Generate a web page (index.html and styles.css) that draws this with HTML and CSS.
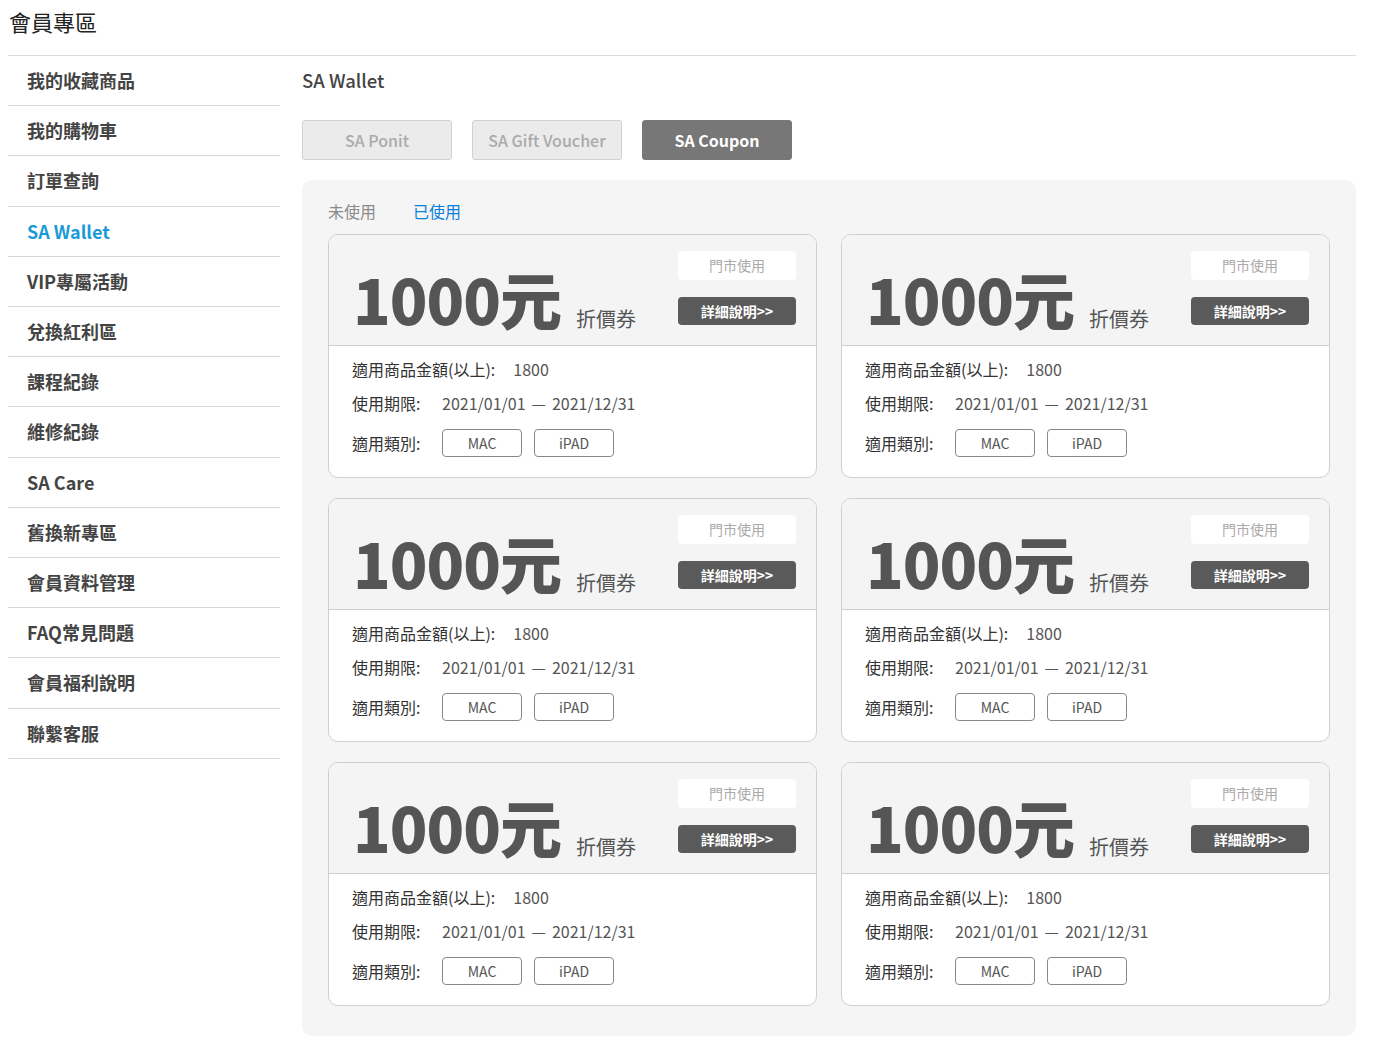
FILE: index.html
```html
<!DOCTYPE html>
<html lang="zh-Hant">
<head>
<meta charset="utf-8">
<title>會員專區</title>
<link rel="stylesheet" href="styles.css">
</head>
<body>
<header class="page-head"><h1 class="page-title">會員專區</h1></header>
<div class="layout">
  <nav class="sidebar">
    <a class="side-item">我的收藏商品</a>
    <a class="side-item">我的購物車</a>
    <a class="side-item">訂單查詢</a>
    <a class="side-item active">SA Wallet</a>
    <a class="side-item">VIP專屬活動</a>
    <a class="side-item">兌換紅利區</a>
    <a class="side-item">課程紀錄</a>
    <a class="side-item">維修紀錄</a>
    <a class="side-item">SA Care</a>
    <a class="side-item">舊換新專區</a>
    <a class="side-item">會員資料管理</a>
    <a class="side-item">FAQ常見問題</a>
    <a class="side-item">會員福利說明</a>
    <a class="side-item">聯繫客服</a>
  </nav>
  <main class="main">
    <h2 class="main-title">SA Wallet</h2>
    <div class="tabs">
      <button class="tab">SA Ponit</button>
      <button class="tab">SA Gift Voucher</button>
      <button class="tab active">SA Coupon</button>
    </div>
    <section class="panel">
      <div class="filters">
        <span class="filter">未使用</span>
        <span class="filter active">已使用</span>
      </div>
      <div class="grid">
        <div class="card">
          <div class="card-top">
            <div class="amount"><span class="num">1000元</span><span class="kind">折價券</span></div>
            <div class="actions"><span class="store">門市使用</span><span class="detail">詳細說明&gt;&gt;</span></div>
          </div>
          <div class="card-body">
            <div class="row r1"><span class="label">適用商品金額(以上):</span><span class="val">1800</span></div>
            <div class="row r2"><span class="label">使用期限:</span><span class="val">2021/01/01<span class="dash">—</span>2021/12/31</span></div>
            <div class="row r3"><span class="label">適用類別:</span><span class="tag">MAC</span><span class="tag">iPAD</span></div>
          </div>
        </div>
        <div class="card">
          <div class="card-top">
            <div class="amount"><span class="num">1000元</span><span class="kind">折價券</span></div>
            <div class="actions"><span class="store">門市使用</span><span class="detail">詳細說明&gt;&gt;</span></div>
          </div>
          <div class="card-body">
            <div class="row r1"><span class="label">適用商品金額(以上):</span><span class="val">1800</span></div>
            <div class="row r2"><span class="label">使用期限:</span><span class="val">2021/01/01<span class="dash">—</span>2021/12/31</span></div>
            <div class="row r3"><span class="label">適用類別:</span><span class="tag">MAC</span><span class="tag">iPAD</span></div>
          </div>
        </div>
        <div class="card">
          <div class="card-top">
            <div class="amount"><span class="num">1000元</span><span class="kind">折價券</span></div>
            <div class="actions"><span class="store">門市使用</span><span class="detail">詳細說明&gt;&gt;</span></div>
          </div>
          <div class="card-body">
            <div class="row r1"><span class="label">適用商品金額(以上):</span><span class="val">1800</span></div>
            <div class="row r2"><span class="label">使用期限:</span><span class="val">2021/01/01<span class="dash">—</span>2021/12/31</span></div>
            <div class="row r3"><span class="label">適用類別:</span><span class="tag">MAC</span><span class="tag">iPAD</span></div>
          </div>
        </div>
        <div class="card">
          <div class="card-top">
            <div class="amount"><span class="num">1000元</span><span class="kind">折價券</span></div>
            <div class="actions"><span class="store">門市使用</span><span class="detail">詳細說明&gt;&gt;</span></div>
          </div>
          <div class="card-body">
            <div class="row r1"><span class="label">適用商品金額(以上):</span><span class="val">1800</span></div>
            <div class="row r2"><span class="label">使用期限:</span><span class="val">2021/01/01<span class="dash">—</span>2021/12/31</span></div>
            <div class="row r3"><span class="label">適用類別:</span><span class="tag">MAC</span><span class="tag">iPAD</span></div>
          </div>
        </div>
        <div class="card">
          <div class="card-top">
            <div class="amount"><span class="num">1000元</span><span class="kind">折價券</span></div>
            <div class="actions"><span class="store">門市使用</span><span class="detail">詳細說明&gt;&gt;</span></div>
          </div>
          <div class="card-body">
            <div class="row r1"><span class="label">適用商品金額(以上):</span><span class="val">1800</span></div>
            <div class="row r2"><span class="label">使用期限:</span><span class="val">2021/01/01<span class="dash">—</span>2021/12/31</span></div>
            <div class="row r3"><span class="label">適用類別:</span><span class="tag">MAC</span><span class="tag">iPAD</span></div>
          </div>
        </div>
        <div class="card">
          <div class="card-top">
            <div class="amount"><span class="num">1000元</span><span class="kind">折價券</span></div>
            <div class="actions"><span class="store">門市使用</span><span class="detail">詳細說明&gt;&gt;</span></div>
          </div>
          <div class="card-body">
            <div class="row r1"><span class="label">適用商品金額(以上):</span><span class="val">1800</span></div>
            <div class="row r2"><span class="label">使用期限:</span><span class="val">2021/01/01<span class="dash">—</span>2021/12/31</span></div>
            <div class="row r3"><span class="label">適用類別:</span><span class="tag">MAC</span><span class="tag">iPAD</span></div>
          </div>
        </div>
      </div>
    </section>
  </main>
</div>
</body>
</html>
```
FILE: styles.css
```css
* { box-sizing: border-box; }
body {
  margin: 8px;
  font-family: "Noto Sans CJK TC", "Noto Sans", sans-serif;
  color: #333;
  background: #fff;
}
.page-head {
  border-bottom: 1px solid #dcdcdc;
  padding-bottom: 21px;
  margin-right: 15px;
}
.page-title {
  margin: 0 0 0 1px;
  font-size: 22px;
  line-height: 26px;
  font-weight: 400;
  color: #222;
}
.layout {
  display: flex;
  margin-right: 15px;
}
.sidebar {
  width: 272px;
  flex: none;
  display: flex;
  flex-direction: column;
}
.side-item {
  display: block;
  padding: 12px 0 12px 19px;
  line-height: 25.2px;
  font-size: 18px;
  font-weight: 700;
  color: #444;
  border-bottom: 1px solid #d9d9d9;
}
.side-item.active { color: #1b9ad8; }
.main {
  flex: 1;
  margin-left: 22px;
  padding-top: 12px;
}
.main-title {
  margin: 0;
  font-size: 18.5px;
  line-height: 24px;
  font-weight: 500;
  color: #444;
}
.tabs {
  display: flex;
  gap: 20px;
  margin-top: 28px;
}
.tab {
  width: 150px;
  height: 40px;
  border: 1px solid #d0d0d0;
  border-radius: 3px;
  background: #ebebeb;
  color: #aaa;
  font-family: inherit;
  font-size: 16px;
  font-weight: 500;
  padding: 0;
}
.tab.active {
  background: #777;
  border-color: #777;
  color: #fff;
  font-weight: 700;
}
.panel {
  margin-top: 20px;
  background: #f5f5f5;
  border-radius: 10px;
  padding: 21px 26px 30px 26px;
}
.filters {
  display: flex;
  gap: 37px;
  font-size: 16px;
  line-height: 20px;
}
.filter { color: #8a8a8a; }
.filter.active { color: #0a80dc; }
.grid {
  margin-top: 13px;
  display: grid;
  grid-template-columns: 1fr 1fr;
  column-gap: 24px;
  row-gap: 20px;
}
.card {
  background: #fff;
  border: 1px solid #cfcfcf;
  border-radius: 10px;
  overflow: hidden;
}
.card-top {
  height: 111px;
  background: #f4f4f4;
  border-bottom: 1px solid #d0d0d0;
  display: flex;
  justify-content: space-between;
  padding: 16px 20px 0 24px;
}
.amount {
  display: flex;
  align-items: flex-end;
  align-self: flex-end;
  padding-bottom: 16px;
  color: #555;
}
.num {
  font-size: 62px;
  line-height: 1;
  font-weight: 900;
  letter-spacing: -1px;
}
.kind {
  font-size: 20px;
  line-height: 20px;
  margin-left: 15px;
  color: #555;
}
.actions {
  display: flex;
  flex-direction: column;
  gap: 17px;
  width: 118px;
}
.store {
  height: 29px;
  background: #fff;
  border-radius: 4px;
  color: #aaa;
  font-size: 14px;
  line-height: 29px;
  text-align: center;
}
.detail {
  height: 28px;
  background: #5a5a5a;
  border-radius: 4px;
  color: #fff;
  font-size: 14px;
  font-weight: 700;
  line-height: 28px;
  text-align: center;
}
.card-body {
  padding: 12px 20px 20px 23px;
}
.row {
  display: flex;
  align-items: center;
  font-size: 16px;
  line-height: 22px;
}
.r1 { margin-bottom: 12px; }
.r2 { margin-bottom: 15px; }
.label {
  min-width: 72px;
  margin-right: 18px;
  color: #333;
}
.val { color: #555; font-weight: 400; }
.dash { margin: 0 6px; }
.tag {
  width: 80px;
  height: 28px;
  border: 1px solid #888;
  border-radius: 4px;
  color: #555;
  font-size: 14px;
  line-height: 26px;
  text-align: center;
  margin-right: 12px;
}
```
